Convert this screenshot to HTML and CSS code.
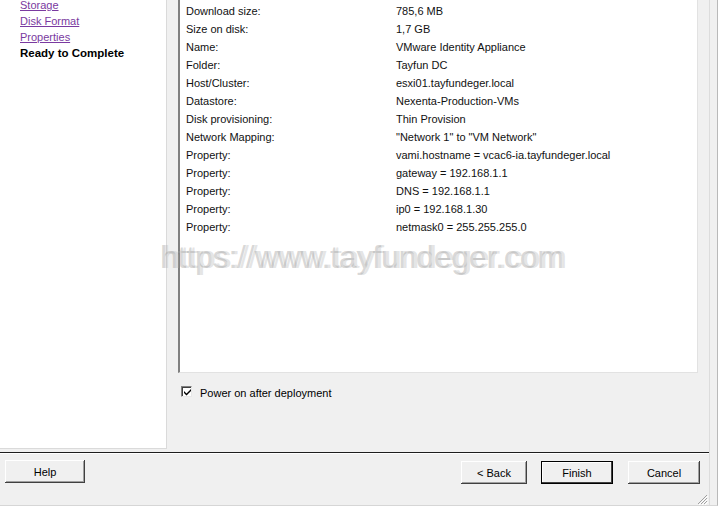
FILE: index.html
```html
<!DOCTYPE html>
<html>
<head>
    <meta charset="UTF-8">
    <title>Deploy OVF Template</title>
    <link rel="stylesheet" href="styles.css">
</head>
<body>
    <div class="window">
        <div class="pane">
            <div class="main">
                <div class="sidebar">
                    <ul class="steps">
                        <li><a href="#">Storage</a></li>
                        <li><a href="#">Disk Format</a></li>
                        <li><a href="#">Properties</a></li>
                        <li class="current">Ready to Complete</li>
                    </ul>
                </div>

                <div class="content">
                    <div class="summary">
                        <div class="row"><span>Download size:</span><span>785,6 MB</span></div>
                        <div class="row"><span>Size on disk:</span><span>1,7 GB</span></div>
                        <div class="row"><span>Name:</span><span>VMware Identity Appliance</span></div>
                        <div class="row"><span>Folder:</span><span>Tayfun DC</span></div>
                        <div class="row"><span>Host/Cluster:</span><span>esxi01.tayfundeger.local</span></div>
                        <div class="row"><span>Datastore:</span><span>Nexenta-Production-VMs</span></div>
                        <div class="row"><span>Disk provisioning:</span><span>Thin Provision</span></div>
                        <div class="row"><span>Network Mapping:</span><span>"Network 1" to "VM Network"</span></div>
                        <div class="row"><span>Property:</span><span>vami.hostname = vcac6-ia.tayfundeger.local</span></div>
                        <div class="row"><span>Property:</span><span>gateway = 192.168.1.1</span></div>
                        <div class="row"><span>Property:</span><span>DNS = 192.168.1.1</span></div>
                        <div class="row"><span>Property:</span><span>ip0 = 192.168.1.30</span></div>
                        <div class="row"><span>Property:</span><span>netmask0 = 255.255.255.0</span></div>
                    </div>

                    <label class="power">
                        <span class="check">
                            <svg width="7" height="7" viewBox="0 0 7 7"><path d="M0 2 L2.5 4.5 L7 0 L7 2 L2.5 6.5 L0 4 Z" fill="#000"/></svg>
                        </span>
                        <span class="power-text">Power on after deployment</span>
                    </label>
                </div>
            </div>

            <div class="rule"></div>

            <div class="footer">
                <button class="help">Help</button>
                <div class="nav">
                    <button class="back">&lt; Back</button>
                    <button class="finish">Finish</button>
                    <button class="cancel">Cancel</button>
                </div>
                <svg class="grip" width="11" height="11" viewBox="0 0 11 11">
                    <path d="M10 1 L1 10 M10 4 L4 10 M10 7 L7 10" stroke="#a0a0a0" stroke-width="1"/>
                    <path d="M11 2 L2 11 M11 5 L5 11 M11 8 L8 11" stroke="#ffffff" stroke-width="1"/>
                </svg>
            </div>
        </div>
    </div>

    <div class="watermark">https://www.tayfundeger.com</div>
</body>
</html>
```

FILE: styles.css
```css
body {
    margin: 0;
    background-color: white;
    font-family: "Liberation Sans", Arial, sans-serif;
    font-size: 11px;
    color: #111;
    position: relative;
    width: 722px;
    height: 514px;
    overflow: hidden;
}

.window {
    width: 717px;
    height: 505px;
    background-color: #f0f0f0;
    border-right: 1px solid #b9b9b9;
    border-bottom: 1px solid #d6d6d6;
}

.pane {
    width: 709px;
    height: 505px;
    border-right: 1px solid #dcdcdc;
    display: flex;
    flex-direction: column;
}

.main {
    display: flex;
    height: 452px;
}

.sidebar {
    width: 166px;
    height: 448px;
    background-color: white;
    border-right: 1px solid #dadada;
    border-bottom: 1px solid #dadada;
    overflow: hidden;
}

.steps {
    list-style: none;
    margin: -3px 0 0 0;
    padding: 0 0 0 20px;
}

.steps li {
    line-height: 16px;
}

.steps a {
    color: #7a3aa0;
    text-decoration: underline;
}

.steps .current {
    font-weight: bold;
    color: #000;
    font-size: 11.5px;
}

.content {
    padding-left: 11px;
    flex: 1;
}

.summary {
    width: 520px;
    height: 373px;
    background-color: white;
    border-left: 2px solid #808080;
    border-right: 1px solid #e2e2e2;
    border-bottom: 1px solid #e2e2e2;
    padding: 2px 0 0 6px;
    box-sizing: border-box;
}

.row {
    display: grid;
    grid-template-columns: 210px auto;
    line-height: 18px;
    white-space: nowrap;
}

.power {
    display: flex;
    align-items: flex-start;
    margin: 13px 0 0 3px;
    gap: 8px;
    color: #000;
}

.power-text {
    margin-top: 1px;
}

.check {
    width: 9px;
    height: 9px;
    background-color: white;
    border-top: 1px solid #808080;
    border-left: 1px solid #808080;
    border-right: 1px solid #e8e8e8;
    border-bottom: 1px solid #e8e8e8;
    box-shadow: inset 1px 1px 0 #404040;
    display: flex;
    align-items: center;
    justify-content: center;
}

.check svg {
    margin: 1px 0 0 1px;
}

.rule {
    border-top: 1px solid #1e1e1e;
    border-bottom: 1px solid #ffffff;
}

.footer {
    flex: 1;
    display: flex;
    justify-content: space-between;
    align-items: flex-start;
    padding: 6px 9px 0 5px;
    position: relative;
}

button {
    font-family: "Liberation Sans", Arial, sans-serif;
    font-size: 11px;
    color: #000;
    background-color: #f0f0f0;
    height: 23px;
    border: none;
    border-radius: 0;
    padding: 0;
    box-shadow: inset -1px -1px 0 #404040, inset 1px 1px 0 #ffffff, inset -2px -2px 0 #a0a0a0;
}

.help {
    width: 80px;
}

.nav {
    display: flex;
    margin-top: 1px;
}

.back {
    width: 66px;
}

.finish {
    width: 72px;
    margin-left: 14px;
    box-shadow: inset 0 0 0 1px #000, inset -2px -2px 0 #404040, inset 2px 2px 0 #ffffff;
}

.cancel {
    width: 72px;
    margin-left: 15px;
}

.grip {
    position: absolute;
    right: 1px;
    bottom: 0;
}

.watermark {
    position: absolute;
    left: 160px;
    top: 239px;
    font-size: 32px;
    letter-spacing: -0.2px;
    color: rgba(160, 160, 160, 0.42);
    text-shadow: 3px 0 0 rgba(180, 180, 180, 0.35);
    white-space: nowrap;
    pointer-events: none;
}
```
